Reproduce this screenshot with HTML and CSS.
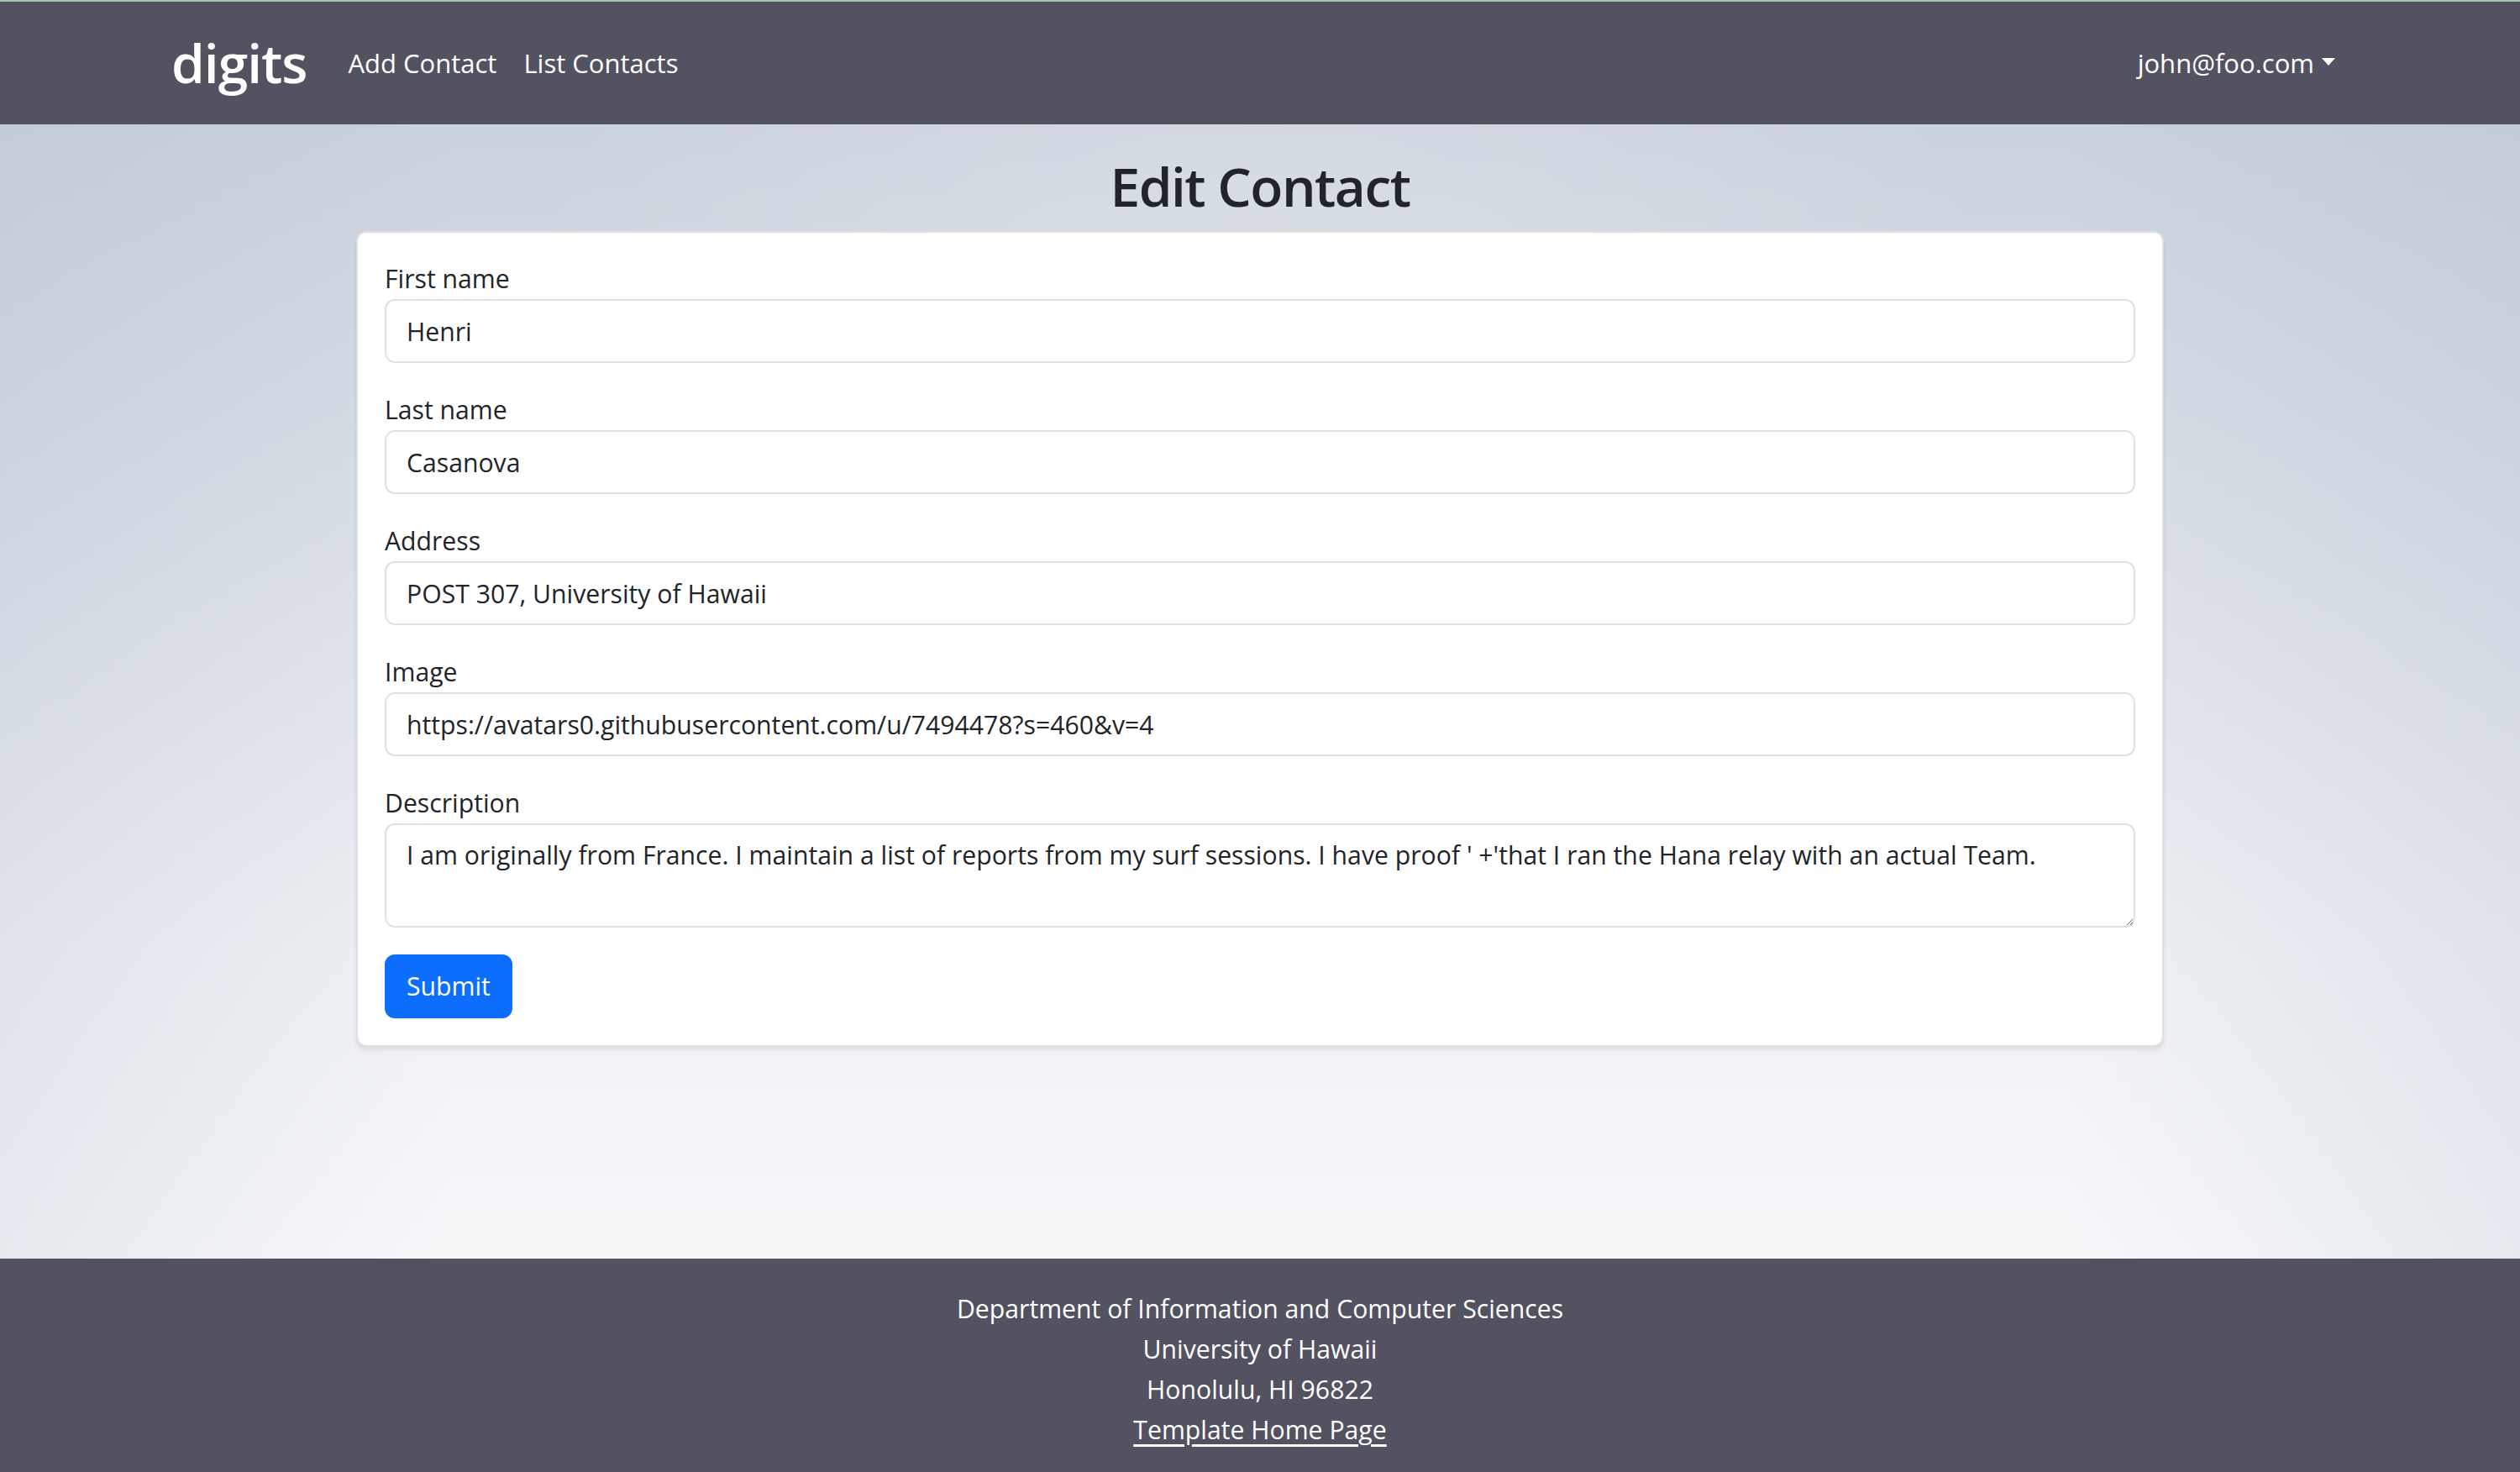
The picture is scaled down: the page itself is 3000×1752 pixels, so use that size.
FILE: index.html
```html
<!DOCTYPE html>
<html lang="en">
<head>
<meta charset="utf-8">
<title>digits</title>
<link rel="stylesheet" href="styles.css">
</head>
<body>
<nav class="navbar">
  <div class="container nav-inner">
    <a class="brand" href="#">digits</a>
    <a class="nav-link" href="#">Add Contact</a>
    <a class="nav-link" href="#">List Contacts</a>
    <a class="nav-link user" href="#">john@foo.com<span class="caret"></span></a>
  </div>
</nav>
<main class="main">
  <h1 class="title">Edit Contact</h1>
  <div class="card">
    <form class="card-body">
      <div class="field">
        <label class="label">First name</label>
        <input class="control" type="text" value="Henri">
      </div>
      <div class="field">
        <label class="label">Last name</label>
        <input class="control" type="text" value="Casanova">
      </div>
      <div class="field">
        <label class="label">Address</label>
        <input class="control" type="text" value="POST 307, University of Hawaii">
      </div>
      <div class="field">
        <label class="label">Image</label>
        <input class="control" type="text" value="https://avatars0.githubusercontent.com/u/7494478?s=460&amp;v=4">
      </div>
      <div class="field">
        <label class="label">Description</label>
        <textarea class="control area">I am originally from France. I maintain a list of reports from my surf sessions. I have proof ' +'that I ran the Hana relay with an actual Team.</textarea>
      </div>
      <button class="btn" type="button">Submit</button>
    </form>
  </div>
</main>
<footer class="footer">
  <div>Department of Information and Computer Sciences</div>
  <div>University of Hawaii</div>
  <div>Honolulu, HI 96822</div>
  <div><a class="foot-link" href="#">Template Home Page</a></div>
</footer>
</body>
</html>
```
FILE: styles.css
```css
* { box-sizing: border-box; }
html, body { margin: 0; padding: 0; }
body {
  min-height: 100vh;
  display: flex;
  flex-direction: column;
  font-family: "Open Sans", "Noto Sans", sans-serif;
  font-size: 30.2px;
  line-height: 48px;
  color: #212529;
}
.navbar {
  background: #525261;
  border-top: 2px solid #a6c8a2;
  height: 148px;
  display: flex;
  align-items: center;
  font-size: 31px;
}
.container {
  width: 2640px;
  margin: 0 auto;
  padding: 0 24px;
}
.nav-inner {
  display: flex;
  align-items: center;
}
.brand {
  color: #fff;
  text-decoration: none;
  font-size: 64px;
  font-weight: 600;
  line-height: 96px;
  margin-right: 33px;
  letter-spacing: -1px;
}
.nav-link {
  color: #fff;
  text-decoration: none;
  padding: 0 16px;
  line-height: 48px;
}
.user { margin-left: auto; display: flex; align-items: center; }
.caret {
  display: inline-block;
  margin-left: 9px;
  width: 0; height: 0;
  border-top: 9px solid #fff;
  border-left: 8px solid transparent;
  border-right: 8px solid transparent;
  margin-top: -4px;
}
.main {
  flex: 1;
  padding-top: 26px;
  background:
    radial-gradient(ellipse 30% 45% at 50% 18%, rgba(255,255,255,0.25), rgba(255,255,255,0) 100%),
    linear-gradient(to right, rgba(170,182,200,0.22) 0%, rgba(170,182,200,0) 18%, rgba(170,182,200,0) 82%, rgba(170,182,200,0.22) 100%),
    linear-gradient(to bottom, #cad2dc 0%, #d5dbe3 25%, #e2e6ec 50%, #eef0f4 72%, #f7f8fa 100%);
}
.title {
  margin: 0 0 5px;
  text-align: center;
  font-size: 64px;
  font-weight: 600;
  line-height: 96px;
  color: #212529;
  letter-spacing: -1.5px;
}
.card {
  width: 2152px;
  margin: 0 auto;
  background: #fff;
  border: 2px solid rgba(0,0,0,0.12);
  border-radius: 12px;
  box-shadow: 0 4px 4px rgba(0,0,0,0.08);
}
.card-body {
  padding: 31px 32px 32px;
  margin: 0;
}
.field { margin-bottom: 32px; }
.label { display: block; line-height: 48px; }
.control {
  display: block;
  width: 100%;
  height: 76px;
  padding: 0 24px;
  border: 2px solid #dee2e6;
  border-radius: 12px;
  font-family: inherit;
  font-size: 30.2px;
  line-height: 48px;
  color: #212529;
  background: #fff;
  outline: none;
}
.area {
  height: 124px;
  padding: 12px 24px;
  resize: vertical;
}
.btn {
  display: block;
  height: 76px;
  padding: 0 24px;
  border: 2px solid #0d6efd;
  border-radius: 12px;
  background: #0d6efd;
  color: #fff;
  font-family: inherit;
  font-size: 30.2px;
  line-height: 48px;
}
.footer {
  background: #525261;
  color: #fff;
  text-align: center;
  padding: 36px 0 26px;
  line-height: 48px;
}
.foot-link { color: #fff; text-decoration: underline; text-underline-offset: 6px; }
```
